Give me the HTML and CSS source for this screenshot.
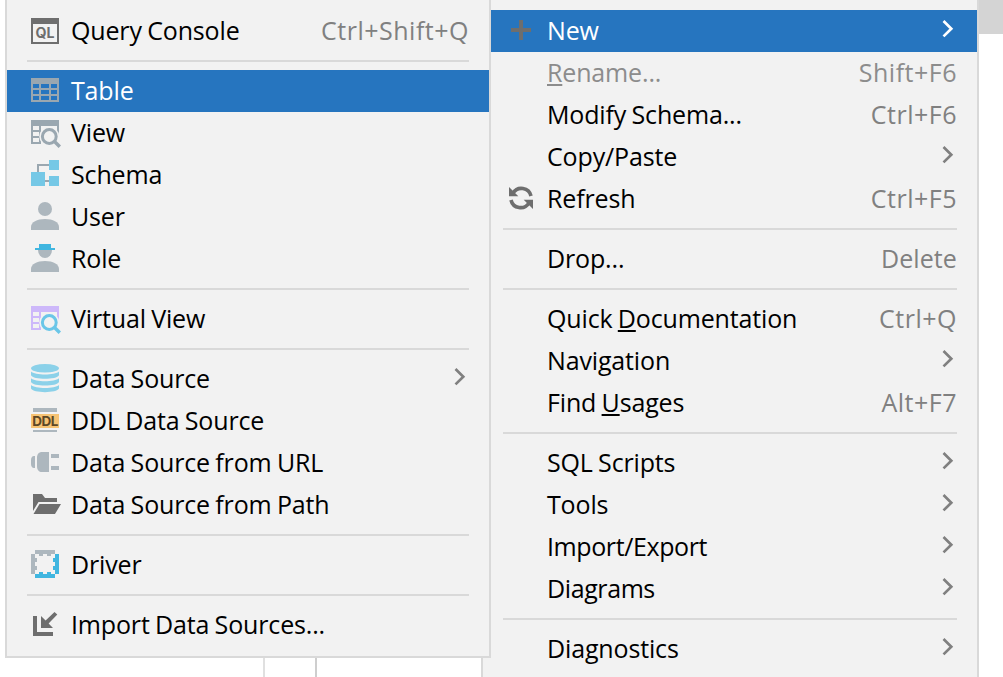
FILE: index.html
```
<!DOCTYPE html>
<html lang="en">
<head>
<meta charset="utf-8">
<title>Database menu</title>
<link rel="stylesheet" href="styles.css">
</head>
<body>
<div class="backdrop"><i class="scroll"></i><i class="rule rule-a"></i><i class="rule rule-b"></i></div>

<svg class="defs" width="0" height="0">
  <defs>
    <symbol id="chevron" viewBox="0 0 12 20"><path d="M1.500 2 9.300 9.700 1.500 17.400" fill="none" stroke="currentColor" stroke-width="2.700"/></symbol>
    <symbol id="view" viewBox="0 0 32 32">
      <path fill="var(--grid)" fill-rule="evenodd" d="M2 3H30V27H2ZM4 9V13H10V9ZM4 15V19H10V15ZM4 21V25H10V21ZM12 9V25H28V9Z"/>
      <path fill="#f2f2f2" d="M12 21H32V28H12Z"/>
      <circle cx="20.300" cy="19.500" r="10" fill="#f2f2f2"/>
      <path d="m25 24 6 6" stroke="#f2f2f2" stroke-width="6"/>
      <circle cx="20.300" cy="19.500" r="6.900" fill="none" stroke="var(--lens)" stroke-width="3"/>
      <path d="m25 24 5.800 5.800" stroke="var(--lens)" stroke-width="3.400"/>
    </symbol>
  </defs>
</svg>

<nav class="menu main">
  <div class="item selected"><svg class="icon" viewBox="0 0 32 32"><path fill="#6e6e6e" d="M14 5h4v8h8v4h-8v8h-4v-8H6v-4h8z"/></svg><span class="label">New</span><svg class="chevron"><use href="#chevron"/></svg></div>
  <div class="item disabled"><i class="icon"></i><span class="label"><u>R</u>ename...</span><kbd>Shift+F6</kbd></div>
  <div class="item"><i class="icon"></i><span class="label">Modify Schema...</span><kbd>Ctrl+F6</kbd></div>
  <div class="item"><i class="icon"></i><span class="label">Copy/Paste</span><svg class="chevron"><use href="#chevron"/></svg></div>
  <div class="item"><svg class="icon" viewBox="0 0 32 32"><g fill="none" stroke="#6e6e6e" stroke-width="3.600"><path d="M8 10.200A9.800 9.800 0 0 1 26 13"/><path d="M24 19.800A9.800 9.800 0 0 1 6 17"/></g><path fill="#6e6e6e" d="M4 4v9.300h9.300zM28 26v-9.300h-9.300z"/></svg><span class="label">Refresh</span><kbd>Ctrl+F5</kbd></div>
  <hr>
  <div class="item"><i class="icon"></i><span class="label">Drop...</span><kbd class="word">Delete</kbd></div>
  <hr>
  <div class="item"><i class="icon"></i><span class="label">Quick <u>D</u>ocumentation</span><kbd>Ctrl+Q</kbd></div>
  <div class="item"><i class="icon"></i><span class="label">Navigation</span><svg class="chevron"><use href="#chevron"/></svg></div>
  <div class="item"><i class="icon"></i><span class="label">Find <u>U</u>sages</span><kbd>Alt+F7</kbd></div>
  <hr>
  <div class="item"><i class="icon"></i><span class="label">SQL Scripts</span><svg class="chevron"><use href="#chevron"/></svg></div>
  <div class="item"><i class="icon"></i><span class="label">Tools</span><svg class="chevron"><use href="#chevron"/></svg></div>
  <div class="item"><i class="icon"></i><span class="label tight">Import/Export</span><svg class="chevron"><use href="#chevron"/></svg></div>
  <div class="item"><i class="icon"></i><span class="label tight">Diagrams</span><svg class="chevron"><use href="#chevron"/></svg></div>
  <hr>
  <div class="item"><i class="icon"></i><span class="label">Diagnostics</span><svg class="chevron"><use href="#chevron"/></svg></div>
</nav>

<nav class="menu sub">
  <div class="item"><svg class="icon" viewBox="0 0 32 32"><path fill="#6e6e6e" fill-rule="evenodd" d="M2 3H30V29H2ZM4 9V27H28V9Z"/><text class="ql" x="6.500" y="22.500" textLength="19" lengthAdjust="spacingAndGlyphs">QL</text></svg><span class="label">Query Console</span><kbd>Ctrl+Shift+Q</kbd></div>
  <hr>
  <div class="item selected"><svg class="icon" viewBox="0 0 32 32"><path fill="#9aa7b0" fill-rule="evenodd" d="M2 3H30V27H2ZM4 9V13H10V9ZM12 9V13H20V9ZM22 9V13H28V9ZM4 15V19H10V15ZM12 15V19H20V15ZM22 15V19H28V15ZM4 21V25H10V21ZM12 21V25H20V21ZM22 21V25H28V21Z"/></svg><span class="label">Table</span></div>
  <div class="item"><svg class="icon view"><use href="#view"/></svg><span class="label">View</span></div>
  <div class="item"><svg class="icon" viewBox="0 0 32 32"><path fill="#9aa7b0" d="M8 5h12v2H10v6H8zM16 21h4v2h-4z"/><path fill="#75c8e6" d="M2 13h14v14H2zM20 1h10v10H20zM20 17h10v10H20z"/></svg><span class="label">Schema</span></div>
  <div class="item"><svg class="icon" viewBox="0 0 32 32"><g fill="#adb7be"><circle cx="16" cy="8" r="7"/><path d="M2 29v-3c0-5 6-8 14-8s14 3 14 8v3z"/></g></svg><span class="label">User</span></div>
  <div class="item"><svg class="icon" viewBox="0 0 32 32"><g fill="#adb7be"><path d="M9 7h14a7 8 0 0 1-14 0z"/><path d="M2 29v-3c0-5 6-8 14-8s14 3 14 8v3z"/></g><path fill="#40b6e0" d="M10 1h12v4h4v2H6V5h4z"/></svg><span class="label">Role</span></div>
  <hr>
  <div class="item"><svg class="icon virtual"><use href="#view"/></svg><span class="label">Virtual View</span></div>
  <hr>
  <div class="item"><svg class="icon" viewBox="0 0 32 32"><g fill="#8bd1e9"><ellipse cx="16" cy="5.300" rx="14" ry="4.300"/><path id="band" d="M2 8.500c4 4 24 4 28 0v3.700c-2 4.700-26 4.700-28 0z"/><use href="#band" y="6.700"/><use href="#band" y="13.400"/></g></svg><span class="label">Data Source</span><svg class="chevron"><use href="#chevron"/></svg></div>
  <div class="item"><svg class="icon" viewBox="0 0 32 32"><path fill="#adb7be" d="M4 3h24v4H4zM4 25h24v2H4z"/><path fill="#f6c374" d="M2 9h28v14H2z"/><text class="ddl" x="3.300" y="21" textLength="26">DDL</text></svg><span class="label">DDL Data Source</span></div>
  <div class="item"><svg class="icon" viewBox="0 0 32 32"><path fill="#adb7be" d="M6 9v12H5c-2 0-3-2-3-4v-4c0-2 1-4 3-4zM20 5v20h-7c-3 0-5-2-5-6v-8c0-4 2-6 5-6zM22 7h8v4h-8zM22 19h8v4h-8z"/></svg><span class="label">Data Source from URL</span></div>
  <div class="item"><svg class="icon" viewBox="0 0 32 32"><path fill="#6e6e6e" d="M4 5h9l3 4h12v4H9.500L4 22zM10.500 15H32l-6 10H4.500z"/></svg><span class="label">Data Source from Path</span></div>
  <hr>
  <div class="item"><svg class="icon" viewBox="0 0 32 32"><path fill="#adb7be" d="M6 1h20v4h-4v2h-4V5h-4v2h-4V5H6v4h2v4H6v4h2v4H6v4H2V5h4z"/><path fill="#40b6e0" d="M26 5h4v20h-4v4H6v-4h4v-2h4v2h4v-2h4v2h4v-4h-2v-4h2v-4h-2V9h2z"/></svg><span class="label">Driver</span></div>
  <hr>
  <div class="item"><svg class="icon" viewBox="0 0 32 32"><path fill="#6e6e6e" d="M4 7h4v16h16v4H4zM12 7l4.600 4.600L25.500 3l2.800 2.600-8.700 9L24 19H12z"/></svg><span class="label">Import Data Sources...</span></div>
</nav>
</body>
</html>
```
FILE: styles.css
```
* { box-sizing: border-box; }
body {
  margin: 0;
  width: 1003px;
  height: 677px;
  overflow: hidden;
  position: relative;
  background: #fff;
  font: 25px/40px "Open Sans", "Noto Sans", sans-serif;
  color: #000;
}
.defs { position: absolute; }
.backdrop { position: absolute; inset: 0; }
.scroll { position: absolute; right: 0; top: 0; width: 24px; height: 34px; background: #d4d4d4; }
.rule { position: absolute; bottom: 0; width: 2px; height: 30px; }
.rule-a { left: 263px; background: #e0e0e0; }
.rule-b { left: 315px; background: #cecece; }

.menu {
  position: absolute;
  padding: 10px 0;
  background: #f2f2f2;
  border: 2px solid #d9d9d9;
}
.main { left: 481px; top: -2px; width: 498px; height: 700px; }
.sub { left: 5px; top: -2px; width: 486px; height: 660px; }

.item {
  display: flex;
  height: 42px;
  padding: 0 20px 0 22px;
  white-space: nowrap;
}
.icon { flex: none; width: 32px; height: 32px; margin: 5px 10px 0 0; }
.view { --grid: #9aa7b0; --lens: #9aa7b0; }
.virtual { --grid: #cdb8fa; --lens: #6ac6e8; }
.label { flex: 1; letter-spacing: -0.15px; word-spacing: -1px; }
.tight { letter-spacing: -0.4px; }
.label u { text-decoration-thickness: 2px; text-underline-offset: 2px; text-decoration-skip-ink: none; }
kbd { font: inherit; letter-spacing: 0.5px; color: #808080; }
.word { letter-spacing: 0.1px; }
.chevron { width: 12px; height: 20px; margin: 9px 3px 0 0; color: #808080; }
.selected { background: #2675bf; color: #fff; }
.selected .chevron { color: #fff; }
.disabled, .disabled kbd { color: #8c8c8c; }
hr { height: 2px; margin: 8px 20px; border: 0; background: #d9d9d9; }

.ql { font: bold 14px "Inter", sans-serif; fill: #6e6e6e; }
.ddl { font: bold 13.500px "Inter", sans-serif; fill: #5c4726; }
```
